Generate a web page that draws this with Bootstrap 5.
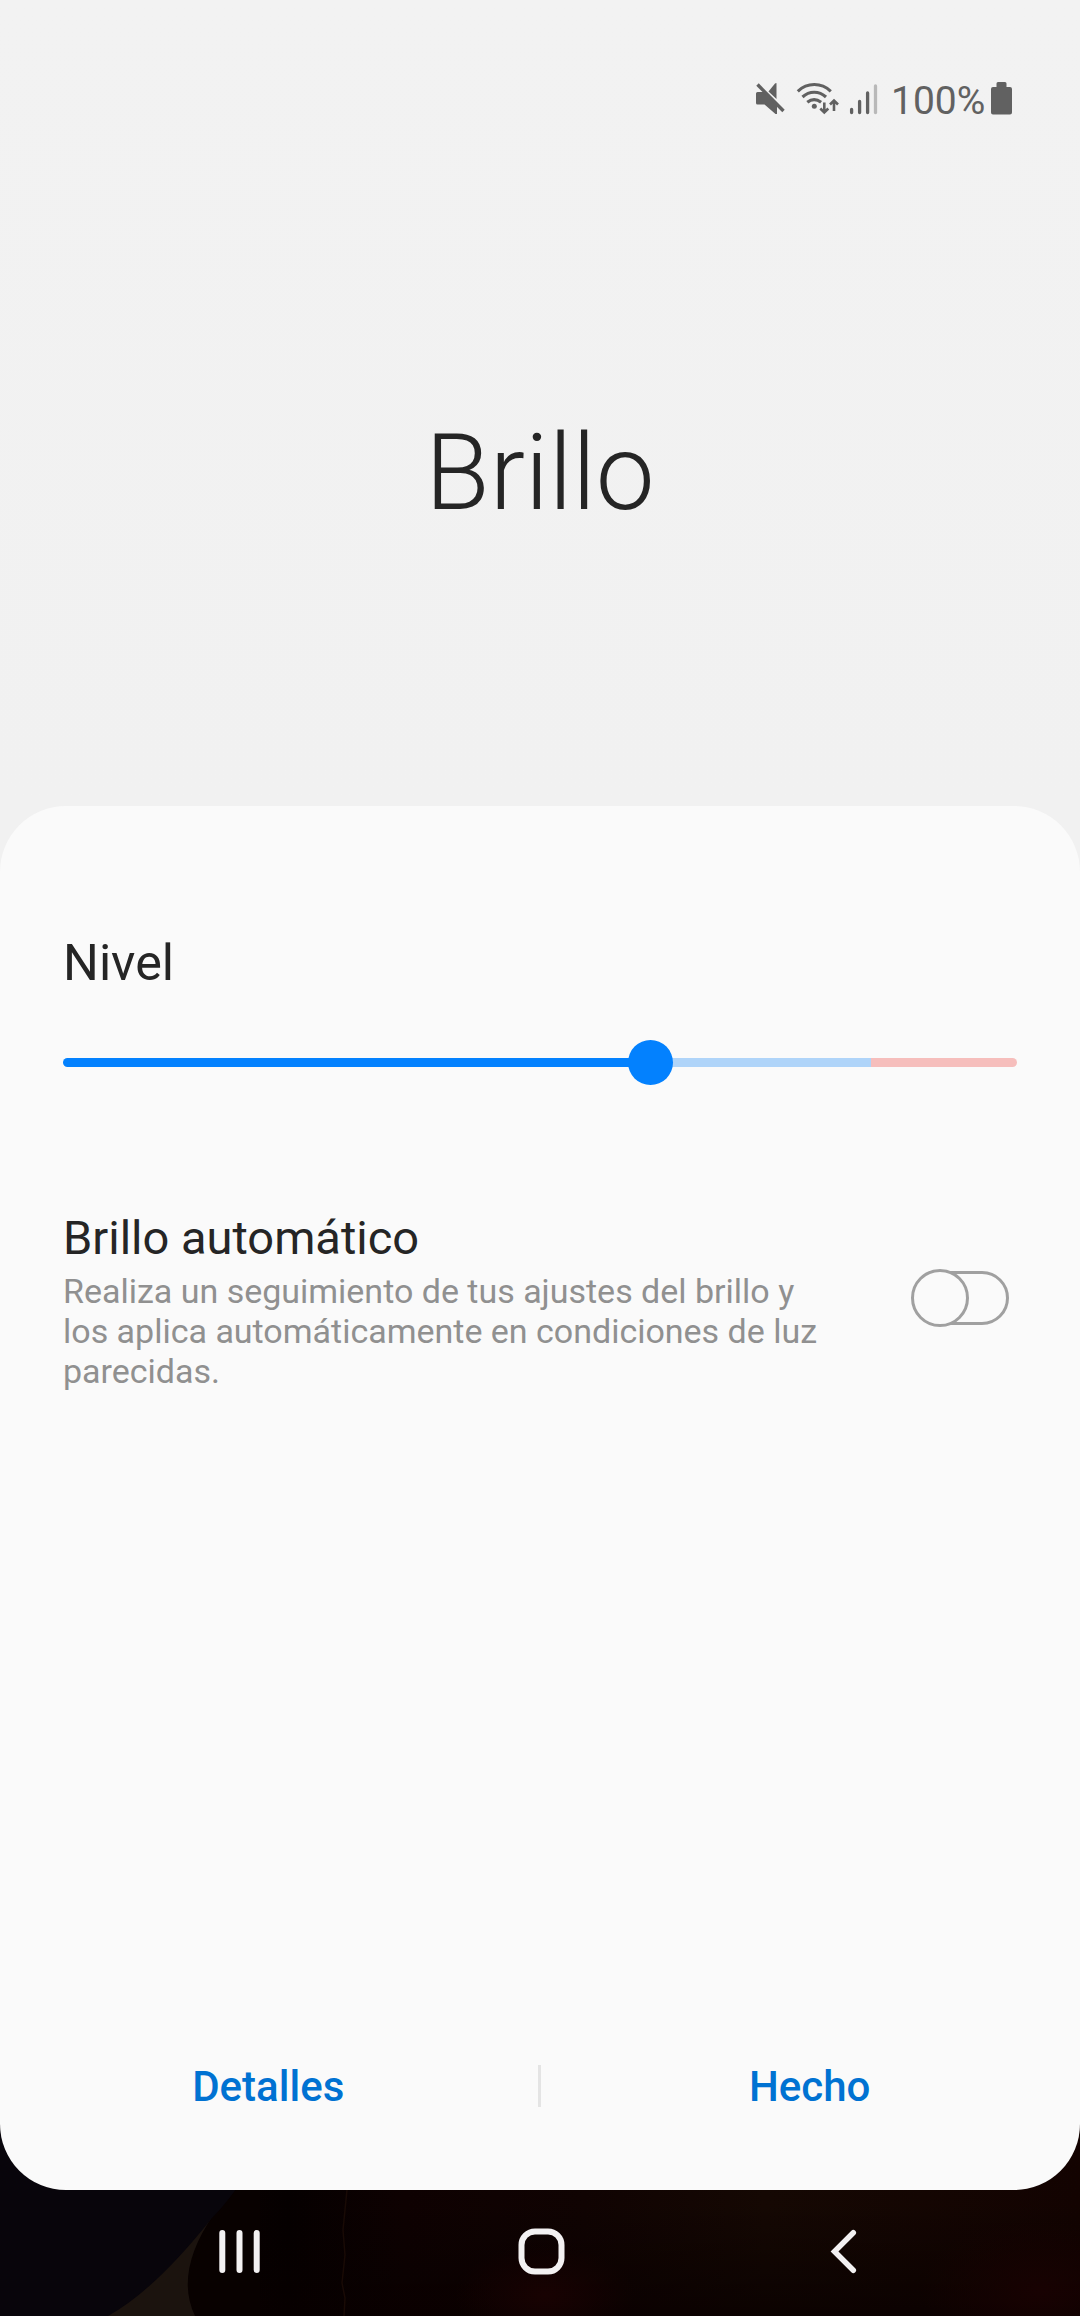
<!DOCTYPE html>
<html lang="es">
<head>
<meta charset="utf-8">
<meta name="viewport" content="width=device-width, initial-scale=1">
<title>Brillo</title>
<link href="https://cdn.jsdelivr.net/npm/bootstrap@5.3.0/dist/css/bootstrap.min.css" rel="stylesheet">
<style>
body{font-family:Roboto,"Noto Sans",sans-serif;background:#f1f1f1;color:#252525;overflow:hidden}
.phone{width:1080px;height:2316px}
.top-area{height:806px;padding-top:81px;background:linear-gradient(#f2f2f2,#f1f1f1)}
.status{height:40px;padding-right:68px;color:#616161;font-size:39px;line-height:40px}
.status svg{display:block}
.pct{width:100px;margin-left:13px}
.title{font-size:105px;font-weight:300;line-height:120px;margin:293px 0 0}
.sheet{height:1384px;border-radius:66px;background:#fafafa;padding:127px 63px 53px;z-index:1}
.level{font-size:50.300px;line-height:60px;margin:0;font-weight:400}
.slider{height:45px;margin-top:47px}
.track{height:9px;border-radius:5px}
.seg-on{background:#0381fe;width:588px}
.seg-mid{background:#afd4f9;width:220px}
.seg-hot{background:#f6bebc}
.thumb{width:45px;height:45px;left:565px;top:0;background:#0381fe}
.auto-row{margin-top:125px}
.auto-title{font-size:47px;line-height:56px;font-weight:400;margin:0}
.auto-text{font-size:34px;line-height:40px;letter-spacing:-.01px;color:#909090;margin:5px 0 0;width:780px}
.toggle{margin:0 7px 6px 0}
.actions{height:100px;margin:0 -62px 0 -64px}
.actions .btn{font-size:42px;font-weight:500;line-height:60px;color:#0072d2;border:0}
.rule{width:3px;height:42px;margin-top:-3px;background:#e4e4e4}
.navbar-area{height:226px;margin-top:-100px;background:#0c0202}
.keys{height:156px;margin-top:70px}
</style>
<script src="https://cdn.jsdelivr.net/npm/bootstrap@5.3.0/dist/js/bootstrap.bundle.min.js"></script>
</head>
<body>
<div class="phone d-flex flex-column">
  <header class="top-area flex-shrink-0">
    <div class="status d-flex justify-content-end align-items-start">
      <svg width="125" height="40" viewBox="753 81 125 40" fill="none" stroke="#616161">
        <!-- muted speaker -->
        <path fill="#616161" stroke="none" d="M757.500 92H764l13 13v9h-1.500L764.500 104.500h-7q-1.500 0-1.500-1.500v-9.500q0-1.500 1.500-1.500zM768.500 91.500L775 83.500q1.500-1 1.500 0v15.500z"/>
        <path stroke-width="3.400" d="M757.500 84.500l26 26.500"/>
        <!-- wifi -->
        <g stroke-width="3.100">
          <path d="M797.800 91.300c9.500-9 23.500-9 33 0"/>
          <path d="M802.500 97c6.800-6.300 16.500-6.300 23.500 0"/>
          <path d="M807.300 102.300c4.300-3.500 9.300-3.500 13.800 0"/>
        </g>
        <circle cx="814.300" cy="106.300" r="2.500" fill="#616161" stroke="none"/>
        <path stroke-width="2.600" d="M824.300 102.500v9.500M820.300 108.500l4 4 4-4M834 111v-10M830 104.500l4-4 4 4"/>
        <!-- signal -->
        <g stroke-width="3.300" stroke-linecap="round"><path d="M851.600 109.500v3M859.600 101.500v11M867.600 93v19.500"/><path stroke="#b9b9b9" d="M875.500 86v26.500"/></g>
      </svg>
      <span class="pct text-nowrap">100%</span>
      <svg width="21" height="34" viewBox="0 1 21 34" fill="#616161"><path d="M7 2h7q1.500 0 1.500 1.500V7H19q2 0 2 2v23.500q0 2-2 2H2q-2 0-2-2V9q0-2 2-2h3.500V3.500Q5.500 2 7 2z"/></svg>
    </div>
    <h1 class="title text-center">Brillo</h1>
  </header>
  <main class="sheet position-relative d-flex flex-column flex-shrink-0">
    <h2 class="level">Nivel</h2>
    <div class="slider position-relative d-flex align-items-center" role="slider" aria-label="Nivel" aria-valuenow="62">
      <div class="track d-flex w-100 overflow-hidden"><div class="seg-on"></div><div class="seg-mid"></div><div class="seg-hot flex-grow-1"></div></div>
      <div class="thumb position-absolute rounded-circle"></div>
    </div>
    <section class="auto-row d-flex justify-content-between align-items-center">
      <div>
        <h3 class="auto-title">Brillo automático</h3>
        <p class="auto-text">Realiza un seguimiento de tus ajustes del brillo y<br>los aplica automáticamente en condiciones de luz<br>parecidas.</p>
      </div>
      <svg class="toggle flex-shrink-0" width="100" height="60" viewBox="0 0 100 60" fill="#fafafa" stroke="#a0a0a0" stroke-width="3"><rect x="4" y="4.500" width="93.500" height="51" rx="25.500"/><circle cx="30" cy="30" r="27.500"/></svg>
    </section>
    <div class="actions mt-auto d-flex align-items-center">
      <button class="btn flex-fill w-50 p-0">Detalles</button>
      <div class="rule flex-shrink-0"></div>
      <button class="btn flex-fill w-50 p-0">Hecho</button>
    </div>
  </main>
  <footer class="navbar-area position-relative flex-shrink-0">
    <svg class="position-absolute top-0 start-0" width="1080" height="226" viewBox="0 0 1080 226">
      <!-- dark wallpaper -->
      <defs>
        <linearGradient id="warm"><stop offset="0" stop-color="#0b0101"/><stop offset=".12" stop-color="#050000"/><stop offset=".25" stop-color="#0e0101"/><stop offset=".45" stop-color="#100302"/><stop offset=".65" stop-color="#150803"/><stop offset="1" stop-color="#130301"/></linearGradient>
        <linearGradient id="fade" x2="0" y2="1"><stop offset=".5" stop-color="#050000" stop-opacity="0"/><stop offset="1" stop-color="#080000" stop-opacity=".7"/></linearGradient>
        <radialGradient id="red"><stop offset="0" stop-color="#180202"/><stop offset="1" stop-color="#180202" stop-opacity="0"/></radialGradient>
      </defs>
      <rect width="1080" height="226" fill="#070302"/>
      <rect x="180" width="900" height="226" fill="url(#warm)"/>
      <rect x="180" width="900" height="226" fill="url(#fade)"/>
      <ellipse cx="545" cy="205" rx="90" ry="50" fill="url(#red)"/>
      <ellipse cx="1040" cy="200" rx="120" ry="70" fill="url(#red)"/>
      <path d="M100 226L212 125 200 226z" fill="#1b130e"/>
      <path d="M214 124Q174 182 195 226H260V70z" fill="#080100"/>
      <path d="M0 0H290Q250 90 212 128Q155 200 108 226H0z" fill="#08050b"/>
      <path d="M347 100L343 140 345 165 342 193 345 208 344 226" fill="none" stroke="#190a05" stroke-width="1.500"/>
    </svg>
    <svg class="keys position-relative d-block" width="1080" height="156" viewBox="0 2160 1080 156" fill="none" stroke="#f3f1f2" stroke-width="6" stroke-linecap="round">
      <path d="M222.300 2233v37M239.500 2233v37M256.700 2233v37"/>
      <rect x="521.500" y="2231.500" width="40" height="40" rx="13.500"/>
      <path stroke-width="5.500" d="M853.300 2232.700L834.500 2251.500 853.300 2270.300"/>
    </svg>
  </footer>
</div>
</body>
</html>
